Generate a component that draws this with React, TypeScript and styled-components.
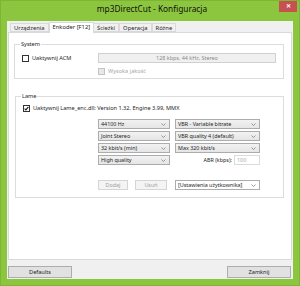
import React from 'react';
import styled, { createGlobalStyle } from 'styled-components';

const GlobalStyle = createGlobalStyle`
  html, body {
    margin: 0;
    padding: 0;
    background: #ffffff;
  }
  body {
    font-family: 'Noto Sans', 'Open Sans', 'Liberation Sans', sans-serif;
    font-size: 5.6px;
    color: #1e1e1e;
  }
`;

const StyledWindow = styled.div`
  width: 300px;
  height: 286px;
  box-sizing: border-box;
  background: #8cc63f;
  border: 1px solid #7fb534;
  display: flex;
  flex-direction: column;
`;

const TitleBar = styled.div`
  height: 20px;
  display: grid;
  grid-template-columns: 18px 1fr 18px;
  align-items: start;
  padding: 0 2px 0 6px;

  .title {
    text-align: center;
    font-size: 8.3px;
    line-height: 16px;
    color: #111111;
  }
`;

const CloseButton = styled.div`
  width: 18px;
  height: 11px;
  background: #c75050;
  color: #ffffff;
  font-size: 6px;
  line-height: 11px;
  text-align: center;
  font-weight: bold;
`;

const Client = styled.div`
  flex: 1;
  margin: 0 6px 6px 6px;
  background: #f0f0f0;
  display: flex;
  flex-direction: column;
  padding: 1px 1px 0 1px;
`;

const TabStrip = styled.div`
  display: flex;
  align-items: flex-end;
  height: 10px;
  padding-left: 2px;
  position: relative;
  z-index: 1;
`;

const Tab = styled.div<{ $active?: boolean }>`
  box-sizing: border-box;
  height: ${(p) => (p.$active ? 11 : 9)}px;
  line-height: ${(p) => (p.$active ? 9 : 8)}px;
  padding: 0 3px;
  margin: ${(p) => (p.$active ? '0 -1px -1px -1px' : '0')};
  border: 1px solid #d9d9d9;
  border-bottom: ${(p) => (p.$active ? 'none' : '1px solid #d9d9d9')};
  background: ${(p) => (p.$active ? '#ffffff' : '#f0f0f0')};
  font-size: 5.8px;
  white-space: nowrap;

  & + & {
    margin-left: ${(p) => (p.$active ? '0' : '-1px')};
  }
`;

const Panel = styled.div`
  height: 228px;
  box-sizing: border-box;
  background: #ffffff;
  border: 1px solid #d9d9d9;
  padding: 7px 7px 0 5px;
  display: flex;
  flex-direction: column;
  gap: 13px;
`;

const GroupBox = styled.fieldset<{ $height: number; $inset?: number }>`
  margin: 0 0 0 ${(p) => p.$inset ?? 0}px;
  height: ${(p) => p.$height}px;
  box-sizing: border-box;
  border: 1px solid #dcdcdc;
  padding: 0 0 0 7px;

  legend {
    padding: 0 1px;
    margin-left: -2px;
    font-size: 5.6px;
    line-height: 8px;
  }
`;

const SystemGrid = styled.div`
  display: grid;
  grid-template-columns: 76px 178px;
  row-gap: 4px;
  padding-top: 5px;
  align-items: center;
`;

const CheckLabel = styled.label<{ $disabled?: boolean }>`
  display: flex;
  align-items: center;
  gap: 3px;
  font-size: 5.6px;
  line-height: 8px;
  white-space: nowrap;
  color: ${(p) => (p.$disabled ? '#a8a8a8' : '#1e1e1e')};
`;

const CheckBox = styled.span<{ $disabled?: boolean }>`
  width: 7px;
  height: 7px;
  box-sizing: border-box;
  border: 1px solid ${(p) => (p.$disabled ? '#c4c4c4' : '#333333')};
  background: ${(p) => (p.$disabled ? '#e8e8e8' : '#ffffff')};
  display: flex;
  align-items: center;
  justify-content: center;
`;

const ReadonlyField = styled.div`
  height: 10px;
  box-sizing: border-box;
  background: #f0f0f0;
  border: 1px solid #d0d0d0;
  color: #8a8a8a;
  font-size: 5.4px;
  line-height: 8px;
  text-align: center;
`;

const LameBody = styled.div`
  padding-top: 4px;
  display: flex;
  flex-direction: column;
`;

const ComboGrid = styled.div`
  display: grid;
  grid-template-columns: 72px 85px;
  grid-auto-rows: 10px;
  column-gap: 5px;
  row-gap: 2px;
  margin: 7px 0 0 75px;
`;

const Combo = styled.div<{ $white?: boolean; $width?: number }>`
  box-sizing: border-box;
  height: 10px;
  width: ${(p) => (p.$width ? `${p.$width}px` : 'auto')};
  border: 1px solid #acacac;
  background: ${(p) => (p.$white ? '#ffffff' : 'linear-gradient(#f2f2f2, #e5e5e5)')};
  display: flex;
  align-items: center;
  justify-content: space-between;
  padding: 0 3px 0 2px;
  font-size: 5.4px;
  white-space: nowrap;
`;

const AbrRow = styled.div`
  display: flex;
  justify-content: flex-end;
  align-items: center;
  gap: 2px;
  font-size: 5.4px;
`;

const AbrInput = styled.div`
  box-sizing: border-box;
  width: 26px;
  height: 10px;
  border: 1px solid #dadada;
  color: #a8a8a8;
  padding-left: 2px;
  line-height: 8px;
`;

const PresetRow = styled.div`
  display: flex;
  align-items: center;
  margin: 15px 0 0 75px;
`;

const SmallButton = styled.div<{ $width: number; $gap: number }>`
  box-sizing: border-box;
  width: ${(p) => p.$width}px;
  margin-right: ${(p) => p.$gap}px;
  height: 10px;
  border: 1px solid #d5d5d5;
  background: #f4f4f4;
  color: #a0a0a0;
  font-size: 5.4px;
  line-height: 8px;
  text-align: center;
`;

const Footer = styled.div`
  display: flex;
  justify-content: space-between;
  padding: 6px 1px 0 0;
`;

const DialogButton = styled.div`
  box-sizing: border-box;
  width: 64px;
  height: 12px;
  border: 1px solid #adadad;
  background: #e1e1e1;
  font-size: 5.6px;
  line-height: 10px;
  text-align: center;
`;

const Chevron = () => (
  <svg width="5" height="3" viewBox="0 0 5 3">
    <path d="M0.5 0.5 L2.5 2.5 L4.5 0.5" fill="none" stroke="#808080" strokeWidth="0.8" />
  </svg>
);

const Tick = () => (
  <svg width="5" height="5" viewBox="0 0 5 5">
    <path d="M0.6 2.6 L1.9 3.9 L4.4 0.8" fill="none" stroke="#1a1a1a" strokeWidth="1.1" />
  </svg>
);

const tabs = ['Urządzenia', 'Enkoder [F12]', 'Ścieżki', 'Operacja', 'Różne'];

const ComboBox: React.FC<{ label: string; white?: boolean; width?: number }> = ({ label, white, width }) => (
  <Combo $white={white} $width={width}>
    <span>{label}</span>
    <Chevron />
  </Combo>
);

const App: React.FC = () => {
  return (
    <StyledWindow>
      <GlobalStyle />
      <TitleBar>
        <span />
        <div className={'title'}>mp3DirectCut - Konfiguracja</div>
        <CloseButton>✕</CloseButton>
      </TitleBar>

      <Client>
        {/* zakładki */}
        <TabStrip>
          {tabs.map((t) => (
            <Tab key={t} $active={t === 'Enkoder [F12]'}>
              {t}
            </Tab>
          ))}
        </TabStrip>

        <Panel>
          {/* System */}
          <GroupBox $height={39}>
            <legend>System</legend>
            <SystemGrid>
              <CheckLabel>
                <CheckBox />
                Uaktywnij ACM
              </CheckLabel>
              <ReadonlyField>128 kbps, 44 kHz, Stereo</ReadonlyField>
              <span />
              <CheckLabel $disabled>
                <CheckBox $disabled />
                Wysoka jakość
              </CheckLabel>
            </SystemGrid>
          </GroupBox>

          {/* Lame */}
          <GroupBox $height={106} $inset={1}>
            <legend>Lame</legend>
            <LameBody>
              <CheckLabel>
                <CheckBox>
                  <Tick />
                </CheckBox>
                Uaktywnij Lame_enc.dll: Version 1.32, Engine 3.99, MMX
              </CheckLabel>
              <ComboGrid>
                <ComboBox label={'44100 Hz'} />
                <ComboBox label={'VBR - Variable bitrate'} />
                <ComboBox label={'Joint Stereo'} />
                <ComboBox label={'VBR quality 4 (default)'} />
                <ComboBox label={'32 kbit/s (min)'} />
                <ComboBox label={'Max 320 kbit/s'} />
                <ComboBox label={'High quality'} />
                <AbrRow>
                  ABR (kbps):
                  <AbrInput>100</AbrInput>
                </AbrRow>
              </ComboGrid>
              <PresetRow>
                <SmallButton $width={30} $gap={7}>
                  Dodaj
                </SmallButton>
                <SmallButton $width={32} $gap={8}>
                  Usuń
                </SmallButton>
                <ComboBox label={'[Ustawienia użytkownika]'} white width={85} />
              </PresetRow>
            </LameBody>
          </GroupBox>
        </Panel>

        <Footer>
          <DialogButton>Defaults</DialogButton>
          <DialogButton>Zamknij</DialogButton>
        </Footer>
      </Client>
    </StyledWindow>
  );
};

export default App;
